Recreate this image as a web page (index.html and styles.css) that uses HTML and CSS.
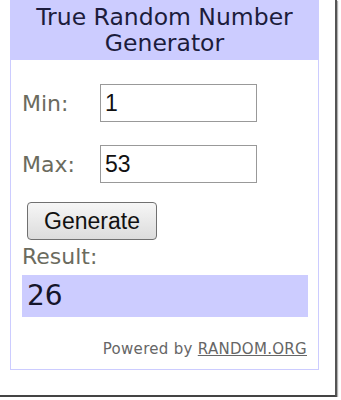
FILE: index.html
```html
<!DOCTYPE html>
<html>
<head>
    <title>True Random Number Generator</title>
    <meta charset="UTF-8">
    <link rel="stylesheet" href="styles.css">
</head>
<body>
    <div class="frame">
        <div class="widget">
            <div class="title">True Random Number Generator</div>
            <div class="form">
                <div class="row">
                    <span class="label">Min:</span>
                    <input class="field" type="text" value="1">
                </div>
                <div class="row">
                    <span class="label">Max:</span>
                    <input class="field" type="text" value="53">
                </div>
                <button class="generate">Generate</button>
                <div class="label result-label">Result:</div>
                <div class="result">26</div>
                <div class="powered">Powered by <a href="#">RANDOM.ORG</a></div>
            </div>
        </div>
    </div>
</body>
</html>
```

FILE: styles.css
```css
body {
    margin: 0;
    background: #fff;
    font-family: "DejaVu Sans", Verdana, sans-serif;
}
.frame {
    width: 335px;
    height: 395px;
    border-right: 2px solid #555;
    border-bottom: 2px solid #444;
    box-shadow: 1px 1px 1px rgba(0,0,0,0.3);
}
.widget {
    margin-left: 10px;
    width: 309px;
    height: 370px;
    border: 1px solid #ccccff;
    border-top: none;
    box-sizing: border-box;
}
.title {
    background: #ccccff;
    color: #1c1c3c;
    font-size: 23.5px;
    line-height: 26px;
    text-align: center;
    padding: 4px 2px 4px;
    height: 60px;
    box-sizing: border-box;
}
.form {
    padding: 24px 10px 0 11px;
}
.row {
    display: flex;
    align-items: center;
    height: 38px;
    margin-bottom: 23px;
}
.label {
    color: #6b6b5e;
    font-size: 22px;
    width: 78px;
}
.field {
    width: 157px;
    height: 38px;
    box-sizing: border-box;
    border: 1px solid #999;
    font-family: "Liberation Sans", Arial, sans-serif;
    font-size: 23px;
    padding: 2px 4px;
    color: #111;
}
.generate {
    margin: -4px 0 0 5px;
    width: 130px;
    height: 38px;
    font-family: "Liberation Sans", Arial, sans-serif;
    font-size: 23px;
    color: #111;
    background: linear-gradient(#f6f6f6, #dcdcdc);
    border: 1px solid #707070;
    border-radius: 4px;
    padding: 0;
}
.result-label {
    width: auto;
    line-height: 24px;
    margin-top: 5px;
}
.result {
    background: #ccccff;
    height: 42px;
    margin-top: 6px;
    padding-left: 5px;
    font-size: 28px;
    line-height: 42px;
    color: #15152a;
}
.powered {
    text-align: right;
    font-size: 15px;
    letter-spacing: 0.3px;
    color: #666;
    margin-top: 23px;
    padding-right: 1px;
}
.powered a {
    color: #666;
}
```
